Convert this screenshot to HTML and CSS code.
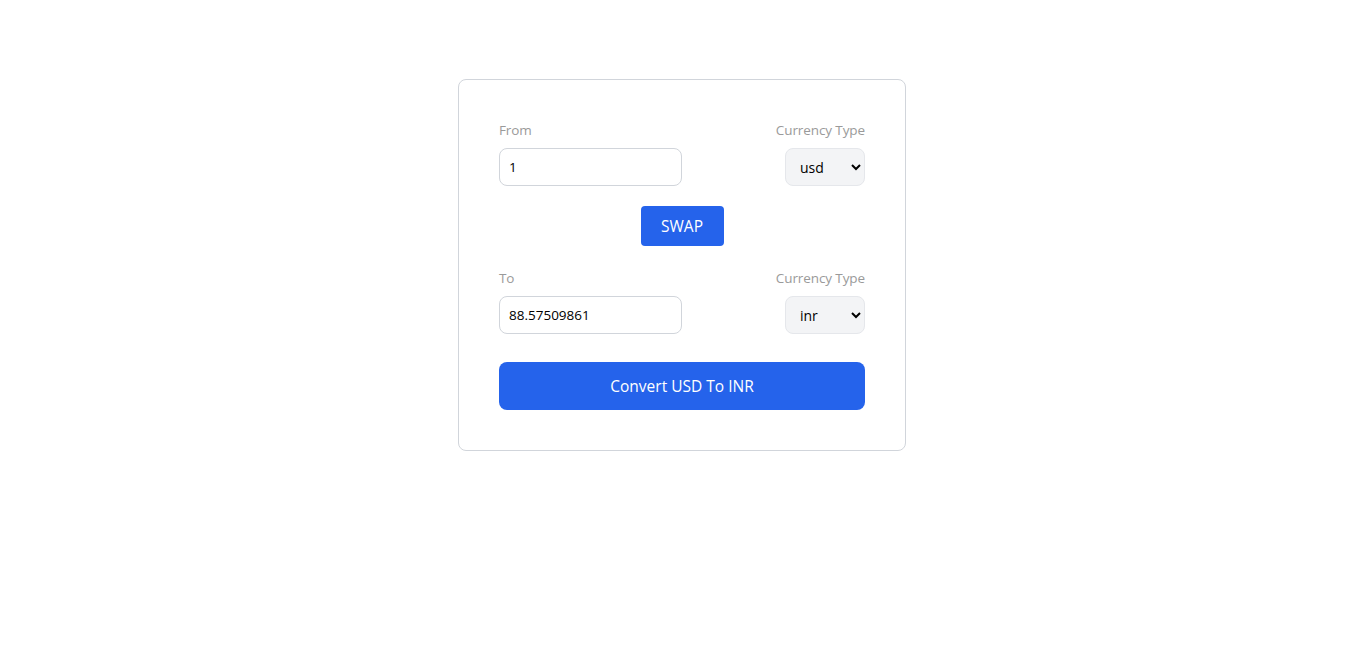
FILE: index.html
```html
<!DOCTYPE html>
<html>
<head>
<meta charset="utf-8">
<link rel="stylesheet" href="styles.css">
</head>
<body>
<div class="page">
  <form class="card">
    <div class="row">
      <div class="field">
        <label class="label">From</label>
        <input class="amount" type="text" value="1">
      </div>
      <div class="field right">
        <label class="label">Currency Type</label>
        <select class="currency"><option>usd</option></select>
      </div>
    </div>
    <div class="swap-wrap">
      <button type="button" class="swap">SWAP</button>
    </div>
    <div class="row">
      <div class="field">
        <label class="label">To</label>
        <input class="amount" type="text" value="88.57509861">
      </div>
      <div class="field right">
        <label class="label">Currency Type</label>
        <select class="currency"><option>inr</option></select>
      </div>
    </div>
    <button type="button" class="convert">Convert USD To INR</button>
  </form>
</div>
</body>
</html>
```
FILE: styles.css
```css
html, body {
  margin: 0;
  padding: 0;
  background: #fff;
  font-family: "Open Sans", "Noto Sans", sans-serif;
}
.page {
  display: flex;
  justify-content: center;
  padding-top: 79px;
  padding-right: 1px;
}
.card {
  width: 366px;
  padding: 40px;
  border: 1px solid #d1d5db;
  border-radius: 8px;
  display: flex;
  flex-direction: column;
}
.row {
  display: flex;
  justify-content: space-between;
}
.field {
  display: flex;
  flex-direction: column;
  gap: 8px;
}
.field.right {
  align-items: flex-end;
}
.label {
  font-size: 13.5px;
  line-height: 20px;
  height: 20px;
  color: #9a9a9a;
  letter-spacing: -0.1px;
}
.amount {
  box-sizing: border-box;
  width: 183px;
  height: 38px;
  border: 1px solid #d1d5db;
  border-radius: 8px;
  padding: 0 9px;
  font-family: inherit;
  font-size: 13.5px;
  color: #000;
  outline: none;
}
.currency {
  box-sizing: border-box;
  width: 80px;
  height: 38px;
  border: 1px solid #e5e7eb;
  border-radius: 8px;
  background: #f3f4f6;
  padding: 0 6px 0 10px;
  font-family: inherit;
  font-size: 14px;
  color: #000;
}
.swap-wrap {
  display: flex;
  justify-content: center;
  padding: 20px 0 22px;
}
.swap {
  width: 83px;
  height: 40px;
  border: none;
  border-radius: 4px;
  background: #2563eb;
  color: #fff;
  font-family: inherit;
  font-size: 15.5px;
  padding: 0;
}
.convert {
  margin-top: 28px;
  height: 48px;
  border: none;
  border-radius: 8px;
  background: #2563eb;
  color: #fff;
  font-family: inherit;
  font-size: 15.5px;
  font-weight: 500;
}
```
